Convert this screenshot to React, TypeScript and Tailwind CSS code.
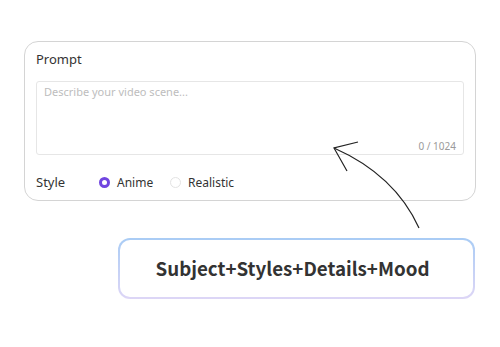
import React from "react";

export default function App() {
  return (
    <div className="relative w-[500px] h-[347px] bg-white overflow-hidden" style={{ fontFamily: '"Noto Sans", "Open Sans", sans-serif' }}>
      <div className="pt-[41px] pl-[24px]">
        <div className="w-[452px] h-[160px] rounded-[14px] border border-[#d4d4d4] px-[11px] pt-[8px]">
          <div className="text-[13px] leading-[18px] text-[#333]">Prompt</div>
          <div className="mt-[13px] h-[74px] rounded-[3px] border border-[#e6e6e6] flex flex-col justify-between px-[7px] pt-[2px] pb-[1px]">
            <div className="text-[11px] leading-[16px] text-[#bdbdbd]">Describe your video scene...</div>
            <div className="text-[10px] leading-[14px] text-[#9a9a9a] text-right">0 / 1024</div>
          </div>
          <div className="mt-[18px] flex items-center text-[13px] text-[#333]">
            <span className="w-[63px]">Style</span>
            <span className="w-[11px] h-[11px] rounded-full border-[3px] border-[#7146e0] bg-white"></span>
            <span className="ml-[7px] text-[12px] w-[53px]">Anime</span>
            <span className="w-[11px] h-[11px] rounded-full border border-[#e3e3e3] bg-white"></span>
            <span className="ml-[7px] text-[12px]">Realistic</span>
          </div>
        </div>
      </div>
      <div className="ml-[118px] mt-[37px] w-[357px] h-[61px] rounded-[12px] p-[2px] bg-gradient-to-b from-[#a9ccf5] to-[#ddd6f6]">
        <div className="w-full h-full rounded-[10px] bg-white flex items-center justify-center pr-[8px] text-[18.75px] font-bold text-[#333]" style={{ fontFamily: '"Noto Sans CJK SC", "Noto Sans", sans-serif' }}>
          Subject+Styles+Details+Mood
        </div>
      </div>
      <svg className="absolute left-0 top-0" width="500" height="347" viewBox="0 0 500 347" fill="none">
        <path d="M419 228 Q 395 175 334 148" stroke="#222" strokeWidth="1.2" />
        <path d="M358 142 L334 148 L347 171" stroke="#222" strokeWidth="1.2" />
      </svg>
    </div>
  );
}
